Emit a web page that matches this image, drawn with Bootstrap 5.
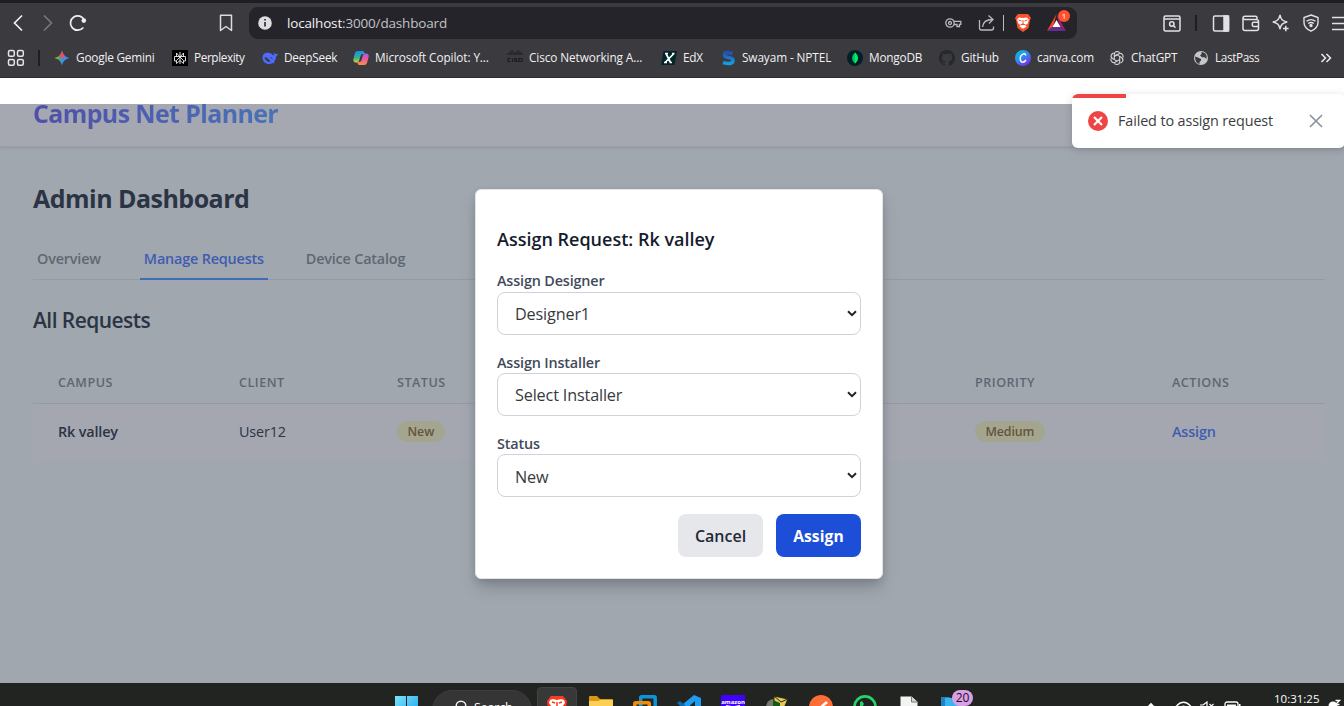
<!DOCTYPE html>
<html lang="en">
<head>
<meta charset="utf-8">
<title>Campus Net Planner</title>
<link href="https://cdn.jsdelivr.net/npm/bootstrap@5.3.0/dist/css/bootstrap.min.css" rel="stylesheet">
<style>
body{font-family:"Open Sans","Noto Sans",sans-serif;background:#fff;width:1344px;height:706px;overflow:hidden;color:#2b3444;line-height:1.2}
svg{display:block;flex:none}
.t{white-space:nowrap;display:inline-block}
.chrome{height:78px;background:#3b3a3e;border-top:3px solid #1f1e23;border-bottom:1px solid #2a292d;color:#f1f1f3}
.toolbar{height:40px;display:grid;grid-template-columns:8px 30px 30px 150px 31px 828px 86px 32px 17px 30px 30px 30px 29px 13px;align-items:center}
.omnibox{height:32px;background:#25242a;border-radius:9px;display:grid;grid-template-columns:8px 30px 658px 33px 25px 11px 33px 30px;align-items:center}
.addr{font-size:13.5px;letter-spacing:-.17px}
.marks{height:31px;display:grid;grid-template-columns:7px 31px 16px 118px 90px 91px 154px 154px 59px 127px 92px 76px 94px 84px 127px 19px;align-items:center;font-size:11.8px;letter-spacing:-.2px;padding-bottom:2px}
.marks .bm{gap:6px}
.marks .wide{letter-spacing:-.1px}
.marks .tight{letter-spacing:-.4px}
.sep{width:2px;height:16px;background:#1f1e23}
.appview{height:579px;margin-top:26px;background:#a1a7ae;overflow:hidden;position:relative}
.apphead{height:43px;background:#a5a8b0;border-bottom:1px solid #999ea7;box-shadow:0 1px 3px rgba(70,75,90,.18);padding-left:33px}
.brand{font-size:25px;font-weight:700;letter-spacing:-.64px;line-height:18px;background:linear-gradient(90deg,#514fa9,#4872b8);-webkit-background-clip:text;background-clip:text;color:transparent;padding-bottom:7px}
.content{padding:0 19px 0 33px}
.title{font-size:25px;font-weight:700;letter-spacing:-.53px;color:#2b3445;line-height:30px;margin:36px 0 0}
.tabs{border-bottom:1px solid #959ba5;height:44px;margin-top:23px;font-size:14.4px;letter-spacing:-.18px;font-weight:600;color:#5f6773}
.tabs span.tabx{height:44px;line-height:45px;padding:0 4px}
.tabs .on{color:#3f5cb0;border-bottom:2px solid #426bb7;height:45px}
.sub{font-size:21px;font-weight:600;letter-spacing:-.55px;line-height:28px;margin:26px 0 0}
.gridrow{display:grid;grid-template-columns:25px 181px 158px 578px 197px 1fr;align-items:center}
.ghead{height:43px;margin-top:27px;font-size:12.600px;letter-spacing:.5px;padding-top:2px;font-weight:600;color:#5e6672;border-bottom:1px solid #959aa3}
.gbody{height:57px;background:#a4a7b0;font-size:14.4px;letter-spacing:-.15px;padding-bottom:2px}
.pill{background:#a3a58f;color:#66533b;font-size:12.4px;letter-spacing:-.1px;font-weight:600;height:21px;line-height:22px;border-radius:11px;padding:0 10.5px}
.dialogbox{position:absolute;left:475px;top:85px;width:408px;height:390px;background:#fff;border:1px solid #e1e4e9;border-radius:6px;padding:38px 21px 0;box-shadow:0 10px 16px -3px rgba(60,66,78,.35),0 3px 6px rgba(60,66,78,.15)}
.dtitle{font-size:18px;font-weight:600;color:#151c2c;line-height:22px;margin-bottom:20px}
.dl{font-size:14.4px;font-weight:600;letter-spacing:-.16px;color:#414a5a;line-height:22px;height:22px}
.pick{height:43px;border:1px solid #cfd2da;border-radius:8px;padding:0 3px 0 17px;font-size:16.2px;letter-spacing:-.15px;color:#37393d}
.pick .t{padding-top:2px}
.dl2{margin-top:17px;height:21px}
.dbtn{width:85px;height:43px;border-radius:8px;border:0;font-size:16px;font-weight:600;padding:1px 0 0;line-height:42px;text-align:center}
.dcancel{background:#e5e7eb;color:#1f2937}
.dassign{background:#1d4ed8;color:#fff;letter-spacing:.1px;font-weight:700;font-size:15.600px}
.notice{position:absolute;left:1072px;top:94px;width:273px;height:54px;background:#fff;border-radius:6px;overflow:hidden;font-size:14.4px;letter-spacing:-.13px;color:#3c3d40}
.notice .msg{margin-left:10px;width:191px}
.nshadow{position:absolute;left:1072px;top:94px;width:273px;height:54px;border-radius:6px;box-shadow:0 2px 9px rgba(0,0,0,.17)}
.nbar{width:54px;height:4px;background:#ef4444}
.tray{height:23px;background:#222422;overflow:hidden;display:grid;grid-template-columns:395px 37px 105px 52px 44px 44px 44px 44px 44px 44px 47px 41px 206px 28px 24px 25px 50px 54px 14px;color:#fff}
.findpill{width:100px;height:40px;border-radius:20px;background:#343534;border:1px solid #3c3d3c;margin-top:7px;padding:9px 0 0 22px;font-size:12.500px;letter-spacing:-.2px;gap:7px}
.tile{width:40px;height:40px;background:#373837;border:1px solid #424342;border-radius:4px;margin-top:4px;padding:7px 0 0 8px}
.count{position:absolute;left:11px;top:-5px;width:21px;height:16px;border-radius:8px;background:#d9a0e6;color:#1b1020;font-size:12px;line-height:16px;text-align:center}
.clock{font-size:11.500px;line-height:15px;margin-top:8px}
</style>
</head>
<body>
<header class="chrome">
 <div class="toolbar">
  <i></i>
  <svg width="20" height="20" viewBox="0 0 20 20" fill="none" stroke="#f0f0f2" stroke-width="1.7"><path d="M14 2.500 6.500 10l7.500 7.500"/></svg>
  <svg width="20" height="20" viewBox="0 0 20 20" fill="none" stroke="#77767b" stroke-width="1.7"><path d="M6 2.500 13.500 10 6 17.500"/></svg>
  <svg width="20" height="20" viewBox="0 0 20 20" fill="none" stroke="#f0f0f2" stroke-width="1.7"><path d="M15.300 14.500A7.200 7.200 0 1 1 16.300 7.200"/><circle cx="15.800" cy="7.600" r="2.300" fill="#f0f0f2" stroke="none"/></svg>
  <svg width="16" height="18" viewBox="0 0 16 18" fill="none" stroke="#dcdce0" stroke-width="1.500"><path d="M2.500 1.200h11v15.300L8 12.500l-5.500 4z" stroke-linejoin="round"/></svg>
  <div class="omnibox">
   <i></i>
   <svg width="16" height="16"><circle cx="8" cy="8" r="6.800" fill="#dedee2"/><path d="M8 7v4.500M8 4v1.500" stroke="#25242a" stroke-width="1.600"/></svg>
   <span class="t addr">localhost<span style="color:#c3c3c8">:3000/dashboard</span></span>
   <svg width="17" height="12" viewBox="0 0 17 12" fill="none" stroke="#b9b9be" stroke-width="1.300"><circle cx="5" cy="6" r="4.200"/><circle cx="5" cy="6" r="1.500"/><path d="M9 4.300h6.800v3h-1.300v2.200h-2.500V7.500H9"/></svg>
   <svg width="18" height="18" viewBox="0 0 18 18" fill="none" stroke="#b9b9be" stroke-width="1.300"><path d="M1.500 6v8q0 2 2 2h10q2 0 2-2v-1.500M4.500 13C5 8 8 5.500 14.500 5.500M10.500 1.500l4.500 4-4 4"/></svg>
   <i style="width:1px;height:16px;background:#bbb"></i>
   <svg width="18" height="20" viewBox="0 0 18 20"><path d="M4 1h10l1.500 1.800L17 5l-1 2-1.500 8L9 19l-5.500-4L2 7 1 5l1.500-2.200z" fill="#fb542b"/><path d="M5 4.500 9 5l4-.5 2 2.300-1.500 4-2 1.200 1 1.500L9 15.800 5.500 13.500l1-1.500-2-1.200L3 6.800z" fill="#fff"/><path d="m4.500 7 3 1M13.500 7l-3 1M9 7v5M6.500 12 9 11l2.500 1" stroke="#fb542b"/></svg>
   <div class="position-relative">
    <svg width="19" height="18" viewBox="0 0 19 18"><path d="M9.500 0 0 17 6 13z" fill="#ff4724"/><path d="M9.500 0 19 17l-6-4z" fill="#9e1f63"/><path d="M0 17h19l-6-5H6z" fill="#662d91"/><path d="m9.500 6 4 7h-8z" fill="#fff"/></svg>
    <span class="position-absolute text-center" style="left:11px;top:-4px;width:12px;height:12px;border-radius:6px;background:#ff5130;color:#fff;font-size:8px;line-height:12px">1</span>
   </div>
  </div>
  <i></i>
  <svg width="18" height="17" viewBox="0 0 18 17" fill="none" stroke="#e2e2e5" stroke-width="1.500"><rect x="1" y="1" width="16" height="15" rx="1.500"/><path d="M1 4h16"/><circle cx="8.800" cy="9" r="2.200"/><path d="m10.500 10.700 2 2"/></svg>
  <i class="sep"></i>
  <svg width="18" height="17" viewBox="0 0 18 17" fill="none" stroke="#e2e2e5" stroke-width="1.500"><rect x="1.500" y="1" width="15" height="15" rx="1.500"/><path d="M12 1h4.500v15H12z" fill="#e2e2e5"/></svg>
  <svg width="18" height="17" viewBox="0 0 18 17" fill="none" stroke="#e2e2e5" stroke-width="1.500"><path d="M15 4.500V2.800Q15 1.200 13.500 1.200H3Q1 1.200 1 3v10.500Q1 15.500 3 15.500h11.500q2 0 2-2v-7q0-2-2-2H3Q1 4.500 1 3M16.500 7.200h-4.700q-1.500 0-1.500 1.400v1.500q0 1.500 1.500 1.500h4.700"/></svg>
  <svg width="18" height="18" viewBox="0 0 18 18" fill="none" stroke="#e2e2e5" stroke-width="1.500" stroke-linejoin="round"><path d="M8 1.200c1 4.200 2.300 5.500 6.800 6.800C10.300 9.300 9 10.600 8 14.800 7 10.600 5.700 9.300 1.200 8 5.700 6.700 7 5.400 8 1.200zM13.800 11.800v5.500M11 14.500h5.600"/></svg>
  <svg width="18" height="18" viewBox="0 0 18 18" fill="none" stroke="#e2e2e5" stroke-width="1.400"><path d="M9 1 16 3.500v5q0 5.500-7 8.700Q2 14 2 8.500v-5z"/><path d="M4.500 7.300q4.500-3.300 9 0M6.200 9.500q2.800-2 5.600 0"/><circle cx="9" cy="11.500" r="1" fill="#e2e2e5"/></svg>
  <svg width="13" height="15" viewBox="0 0 13 15" stroke="#e2e2e5" stroke-width="1.600"><path d="M1 1.500h14M1 7.500h14M1 13.500h14"/></svg>
 </div>
 <div class="marks">
  <i></i>
  <svg width="18" height="18" viewBox="0 0 18 18" fill="none" stroke="#e6e6e9" stroke-width="1.500"><rect x="1.500" y="1.500" width="5.800" height="5.800" rx="1.500"/><rect x="10.500" y="1.500" width="5.800" height="5.800" rx="1.500"/><rect x="1.500" y="10.500" width="5.800" height="5.800" rx="1.500"/><rect x="10.500" y="10.500" width="5.800" height="5.800" rx="1.500"/></svg>
  <i class="sep"></i>
  <div class="bm d-flex align-items-center"><svg width="16" height="16" viewBox="0 0 16 16"><defs><linearGradient id="gm" x1="0" x2="1"><stop offset="0" stop-color="#f9c013"/><stop offset=".3" stop-color="#45b060"/><stop offset=".55" stop-color="#3d8bf5"/><stop offset="1" stop-color="#4a8cff"/></linearGradient></defs><path d="M8 .5c1 4 3 6.500 7.500 7.500C11 9 9 11.500 8 15.500 7 11.500 5 9 .5 8 5 7 7 4.500 8 .5z" fill="url(#gm)"/><path d="M8 .5c.7 3 2 5 3.500 6L8 8 4.500 6.500C6 5.500 7.300 3.500 8 .5z" fill="#ee4d5c"/></svg><span class="t">Google Gemini</span></div>
  <div class="bm d-flex align-items-center"><svg width="16" height="16" viewBox="0 0 16 16"><path d="M0 0h16v16H0z"/><path d="M8 2v12M8 7 4.500 3v4M8 7l3.500-4v4M2.500 6.500h11v4.500h-2M4.500 11h-2V6.500M8 7l-3.500 3.500v3L8 10.500l3.500 3v-3z" fill="none" stroke="#eee" stroke-width=".9"/></svg><span class="t tight">Perplexity</span></div>
  <div class="bm d-flex align-items-center"><svg width="16" height="16" viewBox="0 0 16 16"><path d="M15.800 3.500c-1 .8-2 .6-2.600.4-.8-.3-1-1.300-1.200-2-.6 1-.4 2.300.6 3.100-.5.400-1.200.3-1.800-.1C9.600 4 8.500 3 7.500 3 3 2 .3 4.500.5 8c.3 3.800 3 6 6.500 6 1.500 0 2.600-.3 3.400-.9l2.300.5-.9-1.500C13.500 10.300 14 8 14 6.500c1-.4 1.800-1.500 1.800-3z" fill="#4d6bfe"/><path d="M3 7.500c2 .3 3.500 1.800 5 4-2.500.3-4.500-1.500-5-4zM8.500 7l2 2.200" fill="#3b3a3e" stroke="#3b3a3e" stroke-width=".9"/></svg><span class="t">DeepSeek</span></div>
  <div class="bm d-flex align-items-center"><svg width="16" height="16" viewBox="0 0 16 16"><defs><linearGradient id="c1" x2="0" y2="1"><stop stop-color="#1b8df0"/><stop offset=".6" stop-color="#30b78c"/><stop offset="1" stop-color="#e8c32c"/></linearGradient><linearGradient id="c2" x2="0" y2="1"><stop stop-color="#a35ae8"/><stop offset=".5" stop-color="#ee5c92"/><stop offset="1" stop-color="#f8914a"/></linearGradient></defs><path d="M4.500 1H10q1.200.3 1.500 2L12 4H9.500Q8 4 7.500 6L6 11q-.5 1.500-2 1.500H2Q-.3 12 .5 8.500L2 3Q2.800 1 4.500 1z" fill="url(#c1)"/><path d="M11.500 15H6q-1.200-.3-1.500-2l-.3-1h2.300q1.500 0 2-2L10 5q.5-1.500 2-1.500h2q2.300.500 1.500 4L14 13q-.8 2-2.500 2z" fill="url(#c2)"/></svg><span class="t wide">Microsoft Copilot: Y...</span></div>
  <div class="bm d-flex align-items-center"><svg width="16" height="16" viewBox="0 0 16 16"><path d="M1 3v2M3 1.500V5M5 0v5M7 2v3M9 2v3M11 0v5M13 1.500V5M15 3v2" stroke="#1c1c1f" stroke-width="1"/><path d="M3.500 8.500H1v3h2.500M5.500 8.500V12M10 8.500H7.500V10H10v1.500H7.500M12 8.500h3v3h-3z" fill="none" stroke="#1c1c1f" stroke-width="1.100"/></svg><span class="t wide">Cisco Networking A...</span></div>
  <div class="bm d-flex align-items-center"><svg width="16" height="16" viewBox="0 0 16 16"><path d="M2.500 1H16l-2.500 14H0z" fill="#02262b"/><path d="m5 3.500 4.500 9M13 3.500 4 12.500M4 3.500h3M11 3.500h2.500M3 12.500h3M8.500 12.500h2.500" stroke="#fff" stroke-width="1.700"/></svg><span class="t">EdX</span></div>
  <div class="bm d-flex align-items-center"><svg width="16" height="16" viewBox="0 0 16 16"><defs><linearGradient id="sw" x2="0" y2="1"><stop stop-color="#2350b5"/><stop offset="1" stop-color="#149be0"/></linearGradient></defs><path d="M12.500 3.500Q4 .8 4.500 5 5 7 9 7.500q4.500.8 4 3.500-1 4-10 1.500" fill="none" stroke="url(#sw)" stroke-width="3.600"/></svg><span class="t wide">Swayam - NPTEL</span></div>
  <div class="bm d-flex align-items-center"><svg width="16" height="16"><circle cx="8" cy="8" r="8" fill="#021e2b"/><path d="M8 2.500q6 5.500 0 11-6-5.500 0-11z" fill="#00c853"/><path d="M8 2.500q6 5.500 0 11z" fill="#00ed64"/></svg><span class="t">MongoDB</span></div>
  <div class="bm d-flex align-items-center"><svg width="16" height="16" viewBox="0 0 16 16"><path fill="#24292e" d="M8 0C3.580 0 0 3.580 0 8c0 3.540 2.290 6.530 5.470 7.590.4.070.55-.17.55-.38 0-.19-.01-.82-.01-1.490-2.010.37-2.530-.49-2.690-.94-.09-.23-.48-.94-.82-1.130-.28-.15-.68-.52-.01-.53.630-.01 1.080.58 1.230.82.720 1.210 1.870.87 2.330.66.070-.52.280-.87.510-1.070-1.780-.2-3.640-.89-3.640-3.950 0-.87.310-1.590.820-2.150-.08-.2-.36-1.020.08-2.120 0 0 .67-.21 2.200.82.640-.18 1.320-.27 2-.27s1.360.09 2 .27c1.530-1.040 2.200-.82 2.200-.82.440 1.100.16 1.920.08 2.120.51.560.82 1.270.82 2.150 0 3.070-1.870 3.750-3.650 3.950.29.250.54.730.54 1.480 0 1.070-.01 1.930-.01 2.200 0 .21.150.46.550.38A8.010 8.010 0 0 0 16 8c0-4.420-3.580-8-8-8z"/></svg><span class="t">GitHub</span></div>
  <div class="bm d-flex align-items-center"><svg width="16" height="16" viewBox="0 0 16 16"><defs><linearGradient id="cv" x2=".7" y2="1"><stop stop-color="#00c4cc"/><stop offset=".5" stop-color="#2d8ff0"/><stop offset="1" stop-color="#7d2ae8"/></linearGradient></defs><circle cx="8" cy="8" r="8" fill="url(#cv)"/><path d="M10.800 5.500Q10.500 3.500 8.500 3.800 5 5 5.200 9q.3 3 2.300 3.200 2 0 3.500-2.200" fill="none" stroke="#fff" stroke-width="1.400"/></svg><span class="t">canva.com</span></div>
  <div class="bm d-flex align-items-center"><svg width="16" height="16" viewBox="0 0 16 16" fill="none" stroke="#d4d4d7" stroke-width="1.100"><path d="M5.300 9.600V4.300Q5.600 1.600 8 1.500q1.700 0 2.600 1.200M8 4.500l-2.700 1.600"/><path d="M5.300 9.600V4.300Q5.600 1.600 8 1.500q1.700 0 2.600 1.200" transform="rotate(60 8 8)"/><path d="M5.300 9.600V4.300Q5.600 1.600 8 1.500q1.700 0 2.600 1.200" transform="rotate(120 8 8)"/><path d="M5.300 9.600V4.300Q5.600 1.600 8 1.500q1.700 0 2.600 1.200" transform="rotate(180 8 8)"/><path d="M5.300 9.600V4.300Q5.600 1.600 8 1.500q1.700 0 2.600 1.200" transform="rotate(240 8 8)"/><path d="M5.300 9.600V4.300Q5.600 1.600 8 1.500q1.700 0 2.600 1.200" transform="rotate(300 8 8)"/></svg><span class="t">ChatGPT</span></div>
  <div class="bm d-flex align-items-center"><svg width="16" height="16" viewBox="0 0 16 16"><circle cx="8" cy="8" r="7" fill="#c6c7ca"/><path d="M2 6.500 5 7.500 8 9v1.500L6.500 12v2Q2 13 2 6.500zM8.500 2v2L7 5.500l2 1.800h2.500l2 1.700q1-3-1-5.300Q11 2 8.500 2z" fill="#3b3a3e"/></svg><span class="t tight">LastPass</span></div>
  <svg width="12" height="12" viewBox="0 0 12 12" fill="none" stroke="#ececef" stroke-width="1.500"><path d="m1.500 2 4 4-4 4M6.500 2l4 4-4 4"/></svg>
 </div>
</header>

<main class="appview">
 <div class="apphead"><span class="t brand">Campus Net Planner</span></div>
 <div class="content">
  <h1 class="title">Admin Dashboard</h1>
  <nav class="tabs d-flex">
   <span class="tabx t">Overview</span>
   <span class="tabx t on" style="margin-left:35px">Manage Requests</span>
   <span class="tabx t" style="margin-left:34px">Device Catalog</span>
  </nav>
  <h2 class="sub">All Requests</h2>
  <div class="gridrow ghead"><i></i><span>CAMPUS</span><span>CLIENT</span><span>STATUS</span><span>PRIORITY</span><span>ACTIONS</span></div>
  <div class="gridrow gbody"><i></i><span class="fw-semibold">Rk valley</span><span>User12</span><span><span class="pill d-inline-block">New</span></span><span><span class="pill d-inline-block">Medium</span></span><span class="fw-semibold" style="color:#3f5cb0">Assign</span></div>
 </div>
 <section class="dialogbox">
  <div class="dtitle">Assign Request: Rk valley</div>
  <div class="dl">Assign Designer</div>
  <div class="pick d-flex align-items-center justify-content-between"><span class="t">Designer1</span><svg width="10" height="7" viewBox="0 0 10 7"><path d="m1 1.300 4 3.800 4-3.800" fill="none" stroke="#222" stroke-width="2"/></svg></div>
  <div class="dl dl2">Assign Installer</div>
  <div class="pick d-flex align-items-center justify-content-between"><span class="t">Select Installer</span><svg width="10" height="7" viewBox="0 0 10 7"><path d="m1 1.300 4 3.800 4-3.800" fill="none" stroke="#222" stroke-width="2"/></svg></div>
  <div class="dl dl2">Status</div>
  <div class="pick d-flex align-items-center justify-content-between"><span class="t pt-1">New</span><svg width="10" height="7" viewBox="0 0 10 7"><path d="m1 1.300 4 3.800 4-3.800" fill="none" stroke="#222" stroke-width="2"/></svg></div>
  <div class="d-flex justify-content-end" style="gap:13px;margin-top:17px"><button class="dbtn dcancel">Cancel</button><button class="dbtn dassign">Assign</button></div>
 </section>
</main>

<footer class="tray">
 <i></i>
 <svg width="23" height="23" viewBox="0 0 23 23" style="margin-top:13px"><defs><linearGradient id="wn" x2="1" y2="1"><stop stop-color="#7be4fb"/><stop offset="1" stop-color="#1aa0ef"/></linearGradient></defs><path d="M0 0h11v11H0zM12 0h11v11H12zM0 12h11v11H0zM12 12h11v11H12z" fill="url(#wn)"/></svg>
 <div class="findpill d-flex"><svg width="12" height="16" viewBox="0 0 12 16" fill="none" stroke="#f0f0f0" stroke-width="1.500"><circle cx="6" cy="6" r="4.800"/></svg><span class="t">Search</span></div>
 <div class="tile"><svg width="22" height="22" viewBox="0 0 22 22"><path d="M5 1h12l4 5-2 14H3L1 6z" fill="#f93c1d"/><path d="m4 5 3-1 4 1 4-1 3 1 1 3-3 4H6L3 8z" fill="#fff"/><path d="m6 7 3 1M16 7l-3 1M11 7v5" stroke="#f93c1d" stroke-width="1.500"/></svg></div>
 <svg width="24" height="20" viewBox="0 0 24 20" style="margin-top:13px"><path d="M0 1Q0 0 1 0h7l3 3h12q1 0 1 1v16H0z" fill="#d99a12"/><path d="M0 5h9l2-1h13v16H0z" fill="#fccf55"/></svg>
 <svg width="24" height="20" viewBox="0 0 24 20" style="margin-top:12px" fill="none" stroke-width="3.500"><rect x="7.700" y="1.800" width="14.500" height="14" rx="1" stroke="#0f93d8"/><rect x="1.800" y="7.800" width="14.500" height="14" rx="1" stroke="#f08b0c"/></svg>
 <svg width="24" height="20" viewBox="0 0 24 20" style="margin-top:12px"><path d="M17 0 24 3v17h-6V6L8 15 4 18 0 14z" fill="#1f9cf0"/><path d="m0 8 3-2 12 10-3 3z" fill="#0b6cb5"/></svg>
 <svg width="24" height="24" viewBox="0 0 24 24" style="margin-top:12px"><path d="M0 0h24v24H0z" fill="#3f00ff"/><text x="12" y="9" font-size="6" font-weight="700" fill="#fff" text-anchor="middle">amazon</text><path d="M5 10.500q7 2.500 14 0" stroke="#fff" fill="none"/></svg>
 <svg width="24" height="20" viewBox="0 0 24 20" style="margin-top:12px"><circle cx="9" cy="12" r="8" fill="#77776f"/><path d="m9 1 14 3-4 9-10-4z" fill="#e5c85a" stroke="#292410"/><path d="m9 1 7 6 7-3" stroke="#292410" fill="none"/><path d="M8 5l7 3v8H8z" fill="#14581a"/></svg>
 <svg width="24" height="24" viewBox="0 0 24 24" style="margin-top:12px"><circle cx="12" cy="12" r="12" fill="#ff6c37"/><path d="m8 14 9-8 2 2-8 6z" fill="#fff"/></svg>
 <svg width="24" height="24" viewBox="0 0 24 24" style="margin-top:12px"><circle cx="12" cy="12" r="10.600" fill="#202120" stroke="#25d366" stroke-width="2.600"/><path d="m7 7 2-1 2 3-2 3-2-1z" fill="#25d366"/></svg>
 <svg width="18" height="20" viewBox="0 0 18 20" style="margin-top:13px"><path d="M.500.500h11l6 5.500v14H.500z" fill="#f3f3f3"/><path d="M11.500.500V6h6" fill="#d7d7d7" stroke="#777"/></svg>
 <div class="position-relative" style="margin-top:12px"><svg width="24" height="20" viewBox="0 0 24 20"><path d="M0 2h8l2 1v18H0z" fill="#1f83c4"/><path d="M4 3h20v18H4z" fill="#39b5ee"/></svg><span class="count">20</span></div>
 <svg width="8" height="6" viewBox="0 0 8 6" style="margin-top:19px"><path d="m1 5 3-3 3 3" stroke="#fff" stroke-width="1.600" fill="none"/></svg>
 <svg width="17" height="12" viewBox="0 0 17 12" style="margin-top:18px" fill="none" stroke="#fff" stroke-width="1.300"><path d="M1 5.500q7.500-8.500 15 0M3.500 8q5-5.500 10 0"/></svg>
 <svg width="16" height="12" viewBox="0 0 16 12" style="margin-top:18px" fill="none" stroke="#fff" stroke-width="1.200"><path d="M1 4h3l4-3v10M10.500 3l4 4M14.500 3l-4 4"/></svg>
 <svg width="17" height="12" viewBox="0 0 17 12" style="margin-top:18px"><rect x="1" y="1" width="13" height="9" rx="2" fill="none" stroke="#fff" stroke-width="1.300"/><path d="M3 3.500h9V9H3zM15 3h1.500v4H15z" fill="#fff"/></svg>
 <span class="t clock">10:31:25</span>
 <svg width="13" height="12" viewBox="0 0 13 12" style="margin-top:16px"><circle cx="5" cy="7" r="4.500" fill="#fff"/><path d="M7.500 1.500h4l-4 4h4" fill="none" stroke="#fff" stroke-width="1.300"/></svg>
</footer>

<div class="nshadow"></div>
<aside class="notice"><div class="nbar"></div>
 <div class="d-flex align-items-center" style="padding:13px 0 0 16px"><svg width="20" height="20" viewBox="0 0 20 20"><circle cx="10" cy="10" r="10" fill="#ef4444"/><path d="m6 6 8 8M14 6l-8 8" stroke="#fff" stroke-width="2.200"/></svg><span class="t msg">Failed to assign request</span><svg width="14" height="14" viewBox="0 0 14 14"><path d="m1 1 12 12M13 1 1 13" stroke="#8b93a1" stroke-width="1.700"/></svg></div>
</aside>
<script src="https://cdn.jsdelivr.net/npm/bootstrap@5.3.0/dist/js/bootstrap.bundle.min.js"></script>
</body>
</html>
